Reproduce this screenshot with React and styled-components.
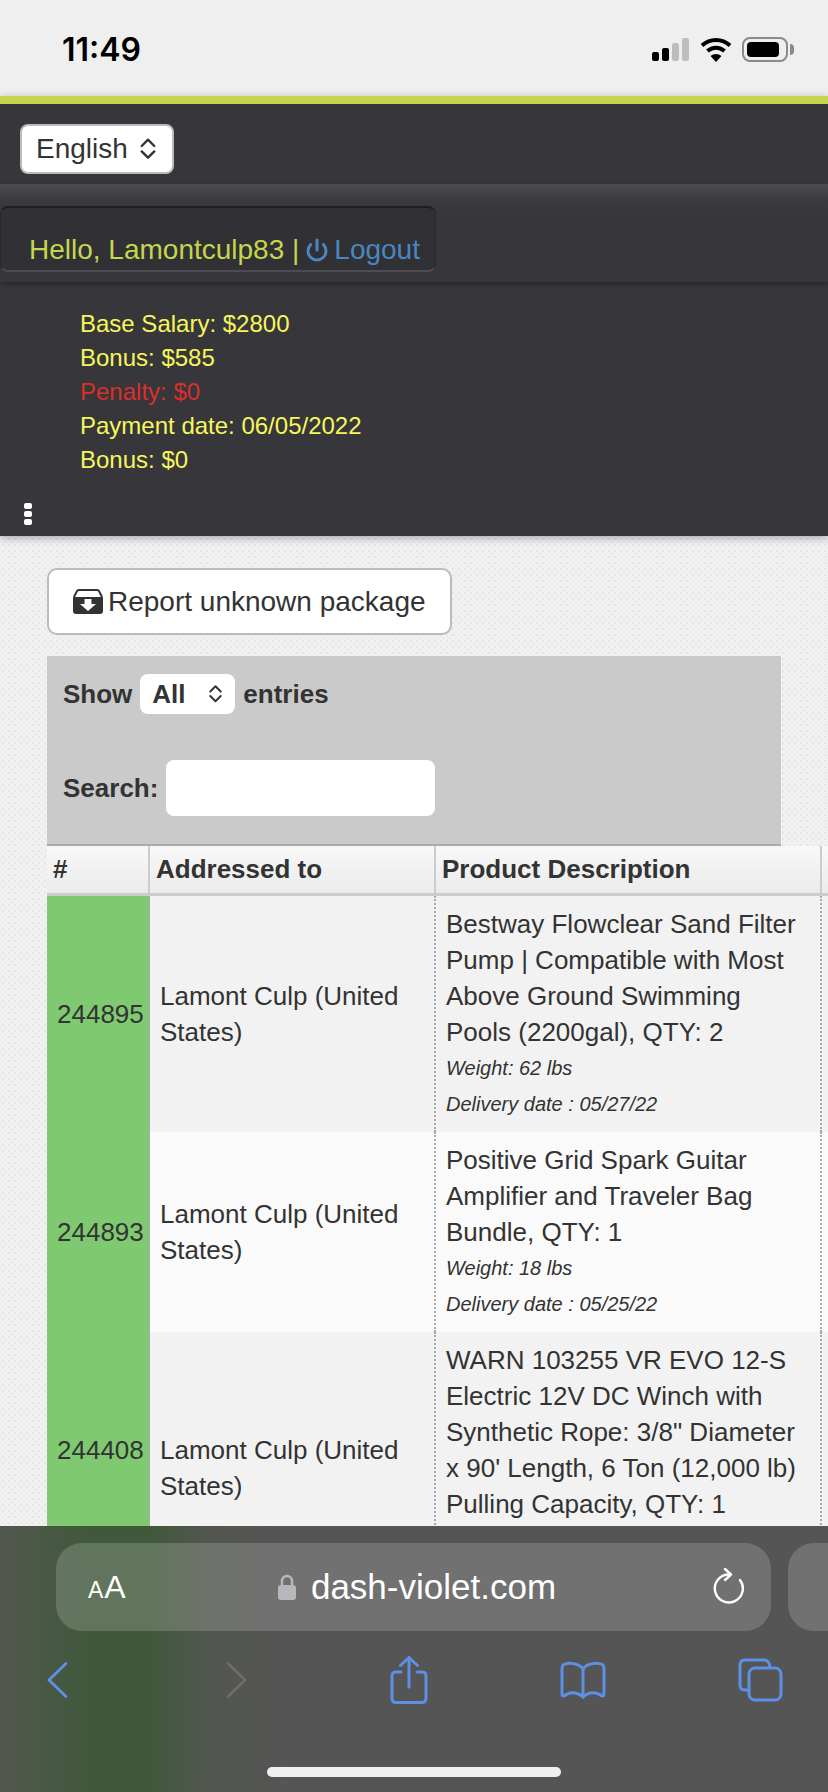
import React from "react";
import styled, { createGlobalStyle } from "styled-components";
import { Power } from "lucide-react";

const GlobalStyle = createGlobalStyle`
  html, body {
    margin: 0;
    padding: 0;
    background: #f0f0f0;
  }
  * {
    box-sizing: border-box;
  }
`;

const PACKAGES = [
  {
    id: "244895",
    name: "Lamont Culp (United States)",
    title: "Bestway Flowclear Sand Filter Pump | Compatible with Most Above Ground Swimming Pools (2200gal), QTY: 2",
    details: ["Weight: 62 lbs", "Delivery date : 05/27/22"],
  },
  {
    id: "244893",
    name: "Lamont Culp (United States)",
    title: "Positive Grid Spark Guitar Amplifier and Traveler Bag Bundle, QTY: 1",
    details: ["Weight: 18 lbs", "Delivery date : 05/25/22"],
  },
  {
    // details of this row sit under the browser bar, only their height counts
    id: "244408",
    name: "Lamont Culp (United States)",
    title: "WARN 103255 VR EVO 12-S Electric 12V DC Winch with Synthetic Rope: 3/8\" Diameter x 90' Length, 6 Ton (12,000 lb) Pulling Capacity, QTY: 1",
    details: ["\u00a0", "\u00a0\u00a0"],
    blankLine: true,
  },
];

const SALARY = [
  { label: "Base Salary: $2800" },
  { label: "Bonus: $585" },
  { label: "Penalty: $0", alert: true },
  { label: "Payment date: 06/05/2022" },
  { label: "Bonus: $0" },
];

const Updown = ({ size = 20 }) => (
  <svg width={size} height={size * 1.3} viewBox="0 0 20 26" fill="none" stroke="#333" strokeWidth="2.6" strokeLinecap="round" strokeLinejoin="round">
    <path d="M3 10 L10 3 L17 10" />
    <path d="M3 16 L10 23 L17 16" />
  </svg>
);

const ArchiveIcon = () => (
  <svg width="30" height="25" viewBox="0 0 30 25">
    <path d="M1 8 L4 2 Q5 1 6 1 H24 Q25 1 26 2 L29 8" fill="none" stroke="#333" strokeWidth="2" />
    <path d="M0 8 H30 V22 Q30 25 27 25 H3 Q0 25 0 22 Z" fill="#333" />
    <path d="M11.5 10 H18.5 V15 H23 L15 22 L7 15 H11.5 Z" fill="#fff" />
  </svg>
);

const App = () => {
  return (
    <Screen>
      <GlobalStyle />
      <StatusBar>
        <Clock>11:49</Clock>
        <StatusIcons>
          <svg width="38" height="23" viewBox="0 0 38 23">
            <rect x="0" y="14" width="7" height="9" rx="2" fill="#000" />
            <rect x="10" y="10" width="7" height="13" rx="2" fill="#000" />
            <rect x="20" y="5" width="7" height="18" rx="2" fill="#bdbdbd" />
            <rect x="30" y="0" width="7" height="23" rx="2" fill="#bdbdbd" />
          </svg>
          <svg width="32" height="25" viewBox="0 0 32 25" fill="none" stroke="#000" strokeWidth="4">
            <path d="M2 8.5 C10 1 22 1 30 8.5" />
            <path d="M7.5 14 C12.5 9.5 19.5 9.5 24.5 14" />
            <path d="M16 25 L10.5 19 C13.5 16.3 18.5 16.3 21.5 19 Z" fill="#000" stroke="none" />
          </svg>
          <BatteryIcon>
            <BatteryLevel />
          </BatteryIcon>
        </StatusIcons>
      </StatusBar>

      <Header>
        <LanguageSelect>
          English
          <Updown size={18} />
        </LanguageSelect>
        <UserBar>
          <UserBox>
            Hello, Lamontculp83 |
            <LogoutLink>
              <Power size={24} strokeWidth={3} />
              Logout
            </LogoutLink>
          </UserBox>
        </UserBar>
        <SalaryList>
          {SALARY.map((row) => (
            <SalaryRow key={row.label + row.alert} $alert={row.alert}>
              {row.label}
            </SalaryRow>
          ))}
        </SalaryList>
        <MenuDots>
          <i />
          <i />
          <i />
        </MenuDots>
      </Header>

      <Main>
        <ReportButton>
          <ArchiveIcon />
          Report unknown package
        </ReportButton>
        <FilterPanel>
          <FilterRow>
            Show
            <EntriesSelect>
              All
              <Updown size={15} />
            </EntriesSelect>
            entries
          </FilterRow>
          <SearchRow>
            Search:
            <SearchInput />
          </SearchRow>
        </FilterPanel>
        <Table>
          <colgroup>
            <col width="103" />
            <col width="286" />
            <col width="386" />
            <col width="300" />
          </colgroup>
          <thead>
            <tr>
              <HeadCell>#</HeadCell>
              <HeadCell>Addressed to</HeadCell>
              <HeadCell>Product Description</HeadCell>
              <HeadCell />
            </tr>
          </thead>
          <tbody>
            {PACKAGES.map((item, i) => (
              <Row key={item.id} $odd={i % 2 === 0}>
                <IdCell>
                  {item.id}
                  {item.blankLine && <div>&nbsp;</div>}
                </IdCell>
                <Cell>{item.name}</Cell>
                <Cell>
                  {item.title}
                  {item.details.map((d) => (
                    <Detail key={d}>{d}</Detail>
                  ))}
                </Cell>
                <Cell />
              </Row>
            ))}
          </tbody>
        </Table>
      </Main>

      <SafariBar>
        <TabStrip>
          <AddressPill>
            <TextSize>
              <small>A</small>A
            </TextSize>
            <Address>
              <svg width="18" height="26" viewBox="0 0 18 26">
                <path d="M4 12 V7 a5 5 0 0 1 10 0 V12" fill="none" stroke="#b8b8bc" strokeWidth="2.4" />
                <rect x="0" y="11" width="18" height="15" rx="3" fill="#b8b8bc" />
              </svg>
              dash-violet.com
            </Address>
            <svg width="32" height="38" viewBox="0 0 32 38" fill="none" stroke="#fff" strokeWidth="2.4" strokeLinecap="round" strokeLinejoin="round">
              <path d="M18 6.5 A14 14 0 1 0 28 12" />
              <path d="M13 1 L19 6.5 L13 12" />
            </svg>
          </AddressPill>
          <NextPill />
        </TabStrip>
        <Toolbar>
          <ToolGroup $gap={160}>
            <svg width="20" height="36" viewBox="0 0 20 36" fill="none" stroke="#5b90e6" strokeWidth="3" strokeLinecap="round" strokeLinejoin="round">
              <path d="M19 1.5 L2 18 L19 34.5" />
            </svg>
            <svg width="20" height="36" viewBox="0 0 20 36" fill="none" stroke="#6b6b6b" strokeWidth="3" strokeLinecap="round" strokeLinejoin="round">
              <path d="M1 1.5 L18 18 L1 34.5" />
            </svg>
          </ToolGroup>
          <ToolGroup $gap={132}>
            <svg width="38" height="48" viewBox="0 0 38 48" fill="none" stroke="#5b90e6" strokeWidth="3" strokeLinecap="round" strokeLinejoin="round">
              <path d="M11 16 H6 Q2 16 2 20 V42 Q2 46.500 6 46.500 H32 Q36 46.500 36 42 V20 Q36 16 32 16 H27" />
              <path d="M19 31 V2" />
              <path d="M10.500 9.500 L19 1.500 L27.500 9.500" />
            </svg>
            <svg width="46" height="38" viewBox="0 0 46 38" fill="none" stroke="#5b90e6" strokeWidth="3" strokeLinecap="round" strokeLinejoin="round">
              <path d="M23 8 C19 2 8 1 3 4 Q2 5 2 8 V33 Q2 35 4 35 C10 30 18 31 23 36 C28 31 36 30 42 35 Q44 35 44 33 V8 Q44 5 43 4 C38 1 27 2 23 8 Z" />
              <path d="M23 8 V36" />
            </svg>
            <svg width="45" height="44" viewBox="0 0 45 44" fill="none" stroke="#5b90e6" strokeWidth="3" strokeLinejoin="round">
              <path d="M11 32 H7 Q2 32 2 27 V7 Q2 2 7 2 H26 Q31 2 32 9" />
              <rect x="11" y="10" width="32" height="32" rx="6" />
            </svg>
          </ToolGroup>
        </Toolbar>
        <HomeIndicator />
      </SafariBar>
    </Screen>
  );
};

export default App;

const Screen = styled.div`
  width: 828px;
  height: 1792px;
  display: flex;
  flex-direction: column;
  overflow: hidden;
  font-family: "Liberation Sans", Arial, sans-serif;
  color: #333;
`;

const StatusBar = styled.div`
  flex: none;
  height: 96px;
  padding: 0 33px 0 62px;
  background: #efefef;
  display: flex;
  align-items: center;
  justify-content: space-between;
`;

const Clock = styled.div`
  font-family: Inter, sans-serif;
  font-weight: 600;
  font-size: 32px;
  color: #000;
  margin-top: 2px;
`;

const StatusIcons = styled.div`
  display: flex;
  align-items: center;
  gap: 10px;
  margin-top: 3px;
`;

const BatteryIcon = styled.div`
  position: relative;
  width: 46px;
  height: 25px;
  margin-right: 7px;
  padding: 3px;
  border: 2px solid #8a8a8a;
  border-radius: 8px;

  &::after {
    content: "";
    position: absolute;
    right: -8px;
    top: 5px;
    width: 4px;
    height: 11px;
    border-radius: 0 4px 4px 0;
    background: #8a8a8a;
  }
`;

const BatteryLevel = styled.div`
  width: 32px;
  height: 100%;
  background: #000;
  border-radius: 4px;
`;

const Header = styled.header`
  flex: none;
  height: 440px;
  padding-top: 20px;
  background: #36363b;
  border-top: 8px solid #c5d64c;
  box-shadow: 0 2px 8px rgba(0, 0, 0, 0.3);
  position: relative;
  z-index: 1;
  display: flex;
  flex-direction: column;
`;

const LanguageSelect = styled.div`
  width: 154px;
  height: 50px;
  margin-left: 20px;
  padding: 0 15px 0 14px;
  background: #fff;
  border: 2px solid #bbb;
  border-radius: 8px;
  display: flex;
  align-items: center;
  justify-content: space-between;
  font-size: 28px;
`;

const UserBar = styled.div`
  height: 98px;
  margin-top: 10px;
  padding-top: 22px;
  background: linear-gradient(#4b4b51 0, #3a3a3f 16px, #36363b 30px);
  box-shadow: 0 2px 4px rgba(0, 0, 0, 0.3);
`;

const UserBox = styled.div`
  width: 436px;
  height: 66px;
  padding: 0 0 2px 28px;
  background: #303035;
  border-top: 2px solid #1f1f23;
  border-bottom: 2px solid #4c4c52;
  border-right: 1px solid #2a2a2e;
  border-left: 1px solid #2a2a2e;
  border-radius: 8px;
  display: flex;
  align-items: flex-end;
  gap: 6px;
  color: #c5d64c;
  font-size: 28px;
  line-height: 36px;
  white-space: nowrap;
`;

const LogoutLink = styled.span`
  display: inline-flex;
  align-items: center;
  gap: 5px;
  color: #4a86c0;
`;

const SalaryList = styled.div`
  padding: 25px 0 0 80px;
`;

const SalaryRow = styled.div`
  height: 34px;
  line-height: 34px;
  font-size: 24px;
  color: ${(p) => (p.$alert ? "#d9302a" : "#f6f65c")};
`;

const MenuDots = styled.div`
  margin: 26px 0 0 24px;
  display: flex;
  flex-direction: column;
  gap: 2px;

  i {
    width: 8px;
    height: 6px;
    border-radius: 2px;
    background: #fff;
  }
`;

const Main = styled.main`
  flex: 1;
  min-height: 0;
  overflow: hidden;
  padding: 32px 0 0 47px;
  background-color: #f1f1f1;
  background-image:
    radial-gradient(#e6e6e6 1px, transparent 1.5px),
    radial-gradient(#e9e9e9 1px, transparent 1.5px);
  background-size: 6px 6px;
  background-position: 0 0, 3px 3px;
`;

const ReportButton = styled.button`
  width: 405px;
  height: 67px;
  padding: 0 0 0 24px;
  background: #fff;
  border: 2px solid #bbb;
  border-radius: 10px;
  display: flex;
  align-items: center;
  gap: 5px;
  font-family: inherit;
  font-size: 28px;
  color: #333;
`;

const FilterPanel = styled.div`
  width: 734px;
  height: 190px;
  margin-top: 21px;
  padding: 18px 16px 0;
  background: #cacaca;
  border-bottom: 2px solid #aaa;
  font-size: 26px;
  font-weight: 700;
`;

const FilterRow = styled.div`
  height: 40px;
  display: flex;
  align-items: center;
  gap: 8px;
`;

const EntriesSelect = styled.div`
  width: 95px;
  height: 40px;
  padding: 0 12px;
  background: #fff;
  border-radius: 8px;
  display: flex;
  align-items: center;
  justify-content: space-between;
`;

const SearchRow = styled.div`
  margin-top: 46px;
  height: 56px;
  display: flex;
  align-items: center;
  gap: 8px;
`;

const SearchInput = styled.input`
  width: 269px;
  height: 56px;
  background: #fff;
  border: 0;
  border-radius: 8px;
`;

const Table = styled.table`
  width: 1075px;
  table-layout: fixed;
  border-collapse: separate;
  border-spacing: 0;
  font-size: 26px;
`;

const HeadCell = styled.th`
  height: 50px;
  padding: 0 6px;
  text-align: left;
  font-size: 26px;
  background: linear-gradient(#f8f8f8, #ebebeb);
  border-right: 2px solid #ccc;
  border-bottom: 3px solid #ccc;
`;

const Row = styled.tr`
  background: ${(p) => (p.$odd ? "#f2f2f2" : "#fafafa")};
`;

const Cell = styled.td`
  padding: 10px 10px;
  line-height: 36px;
  vertical-align: middle;
  border-right: 2px dotted #aaa;
`;

const IdCell = styled(Cell)`
  padding: 0 0 0 10px;
  background: #7fca70;
  white-space: nowrap;
`;

const Detail = styled.div`
  font-size: 20px;
  font-style: italic;
`;

const SafariBar = styled.div`
  flex: none;
  height: 266px;
  padding-top: 17px;
  background: linear-gradient(90deg, #52574f 0, #41593b 85px, #41593b 150px, #52564f 210px, #555 290px);
  display: flex;
  flex-direction: column;
`;

const TabStrip = styled.div`
  display: flex;
  gap: 17px;
  padding-left: 56px;
`;

const AddressPill = styled.div`
  flex: none;
  width: 715px;
  height: 88px;
  padding: 0 27px 0 32px;
  border-radius: 26px;
  background: rgba(255, 255, 255, 0.17);
  display: flex;
  align-items: center;
  justify-content: space-between;
  color: #fff;
`;

const NextPill = styled.div`
  flex: none;
  width: 100px;
  height: 88px;
  border-radius: 26px;
  background: rgba(255, 255, 255, 0.17);
`;

const TextSize = styled.div`
  font-size: 32px;
  width: 34px;
  white-space: nowrap;

  small {
    font-size: 23px;
    margin-right: 1px;
  }
`;

const Address = styled.div`
  display: flex;
  align-items: center;
  gap: 15px;
  font-size: 35px;
`;

const Toolbar = styled.div`
  margin-top: 25px;
  padding: 0 45px 0 47px;
  display: flex;
  justify-content: space-between;
  align-items: center;
`;

const ToolGroup = styled.div`
  display: flex;
  align-items: center;
  gap: ${(p) => p.$gap}px;
`;

const HomeIndicator = styled.div`
  width: 294px;
  height: 10px;
  margin: 63px 0 0 267px;
  border-radius: 5px;
  background: #f0f0f0;
`;
